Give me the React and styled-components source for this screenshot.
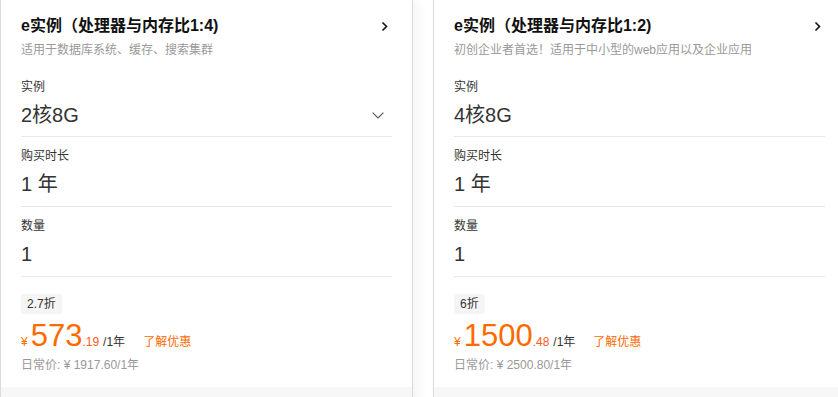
import React from "react";
import styled, { createGlobalStyle } from "styled-components";

const GlobalStyle = createGlobalStyle`
  html, body {
    margin: 0;
    padding: 0;
    background: #ffffff;
    overflow: hidden;
  }
  body {
    font-family: "Liberation Sans", Arial, "Noto Sans CJK SC", sans-serif;
    color: #333;
  }
`;

const Page = styled.div`
  display: flex;
  gap: 20px;
  width: max-content;
  align-items: stretch;
`;

const Card = styled.section`
  width: 411px;
  border-left: 1px solid #dadae0;
  border-right: 1px solid #dadae0;
  background: #fff;
  display: flex;
  flex-direction: column;
  box-shadow: 6px 0 10px rgba(0, 0, 0, 0.04);
`;

const CardBody = styled.div`
  padding: 14px 20px 12px;
`;

const CardFooter = styled.div`
  height: 40px;
  background: #f7f7f7;
`;

const Header = styled.header`
  margin-bottom: 8px;
`;

const TitleRow = styled.div`
  display: flex;
  align-items: center;
  justify-content: space-between;
  height: 24px;
`;

const Title = styled.h3`
  margin: 0;
  font-size: 16px;
  line-height: 24px;
  font-weight: 700;
  color: #111;
`;

const Subtitle = styled.p`
  margin: 2px 0 0;
  font-size: 12px;
  line-height: 20px;
  color: #999;
`;

const Field = styled.div`
  padding: 9px 0 ${(p) => (p.$first ? "7px" : "8px")};
  border-bottom: 1px solid #e8e8e8;
`;

const Label = styled.div`
  font-size: 12px;
  line-height: 20px;
  color: #333;
`;

const ValueRow = styled.div`
  margin-top: 4px;
  display: flex;
  align-items: center;
  justify-content: space-between;
  height: 28px;
`;

const Value = styled.div`
  font-size: 20px;
  line-height: 28px;
  color: #333;
`;

const PriceBlock = styled.div`
  padding-top: 17px;
`;

const Tag = styled.span`
  display: inline-block;
  height: 20px;
  line-height: 20px;
  padding: 0 6px;
  font-size: 12px;
  color: #333;
  background: #f5f5f6;
  border-radius: 2px;
`;

const PriceRow = styled.div`
  margin-top: 4px;
  display: flex;
  align-items: baseline;
  height: 36px;
`;

const Currency = styled.span`
  font-size: 12px;
  color: #ff6a00;
  margin-right: 3px;
`;

const Integer = styled.span`
  font-size: 31px;
  line-height: 36px;
  color: #ff6a00;
`;

const Decimal = styled.span`
  font-size: 12px;
  color: #ff5a1f;
`;

const Unit = styled.span`
  font-size: 12px;
  color: #333;
  margin-left: 4px;
`;

const Promo = styled.a`
  font-size: 12px;
  color: #ff6a00;
  margin-left: 18px;
  text-decoration: none;
  cursor: pointer;
`;

const Original = styled.div`
  margin-top: 1px;
  font-size: 12px;
  line-height: 20px;
  color: #999;
`;

const IconRight = styled.svg`
  margin-right: 4px;
  flex: none;
`;

const IconDown = styled.svg`
  margin-right: 8px;
  flex: none;
`;

const ChevronRight = () => (
  <IconRight width="7" height="11" viewBox="0 0 7 11">
    <polyline
      points="1.5,1.5 5.5,5.5 1.5,9.5"
      fill="none"
      stroke="#111"
      strokeWidth="1.6"
    />
  </IconRight>
);

const ChevronDown = () => (
  <IconDown width="12" height="7" viewBox="0 0 12 7">
    <polyline
      points="0.6,0.6 6,6 11.4,0.6"
      fill="none"
      stroke="#555"
      strokeWidth="1.1"
    />
  </IconDown>
);

const plans = [
  {
    title: "e实例（处理器与内存比1:4)",
    desc: "适用于数据库系统、缓存、搜索集群",
    spec: "2核8G",
    select: true,
    discount: "2.7折",
    int: "573",
    dec: ".19",
    original: "1917.60",
  },
  {
    title: "e实例（处理器与内存比1:2)",
    desc: "初创企业者首选！适用于中小型的web应用以及企业应用",
    spec: "4核8G",
    select: false,
    discount: "6折",
    int: "1500",
    dec: ".48",
    original: "2500.80",
  },
];

const PlanCard = ({ plan }) => (
  <Card>
    <CardBody>
      <Header>
        <TitleRow>
          <Title>{plan.title}</Title>
          <ChevronRight />
        </TitleRow>
        <Subtitle>{plan.desc}</Subtitle>
      </Header>
      <Field $first>
        <Label>实例</Label>
        <ValueRow>
          <Value>{plan.spec}</Value>
          {plan.select && <ChevronDown />}
        </ValueRow>
      </Field>
      <Field>
        <Label>购买时长</Label>
        <ValueRow>
          <Value>1 年</Value>
        </ValueRow>
      </Field>
      <Field>
        <Label>数量</Label>
        <ValueRow>
          <Value>1</Value>
        </ValueRow>
      </Field>
      <PriceBlock>
        <Tag>{plan.discount}</Tag>
        <PriceRow>
          <Currency>¥</Currency>
          <Integer>{plan.int}</Integer>
          <Decimal>{plan.dec}</Decimal>
          <Unit>/1年</Unit>
          <Promo>了解优惠</Promo>
        </PriceRow>
        <Original>日常价: ¥ {plan.original}/1年</Original>
      </PriceBlock>
    </CardBody>
    <CardFooter />
  </Card>
);

export default function App() {
  return (
    <>
      <GlobalStyle />
      <Page>
        {plans.map((p) => (
          <PlanCard key={p.spec} plan={p} />
        ))}
      </Page>
    </>
  );
}
